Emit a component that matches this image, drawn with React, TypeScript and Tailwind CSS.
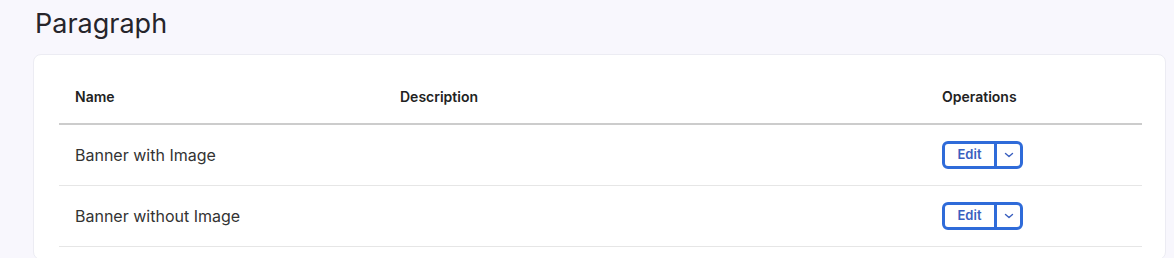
import React from "react";

const rows = ["Banner with Image", "Banner without Image"];

function SplitButton() {
  return (
    <div className="flex h-[28px] w-[81px] overflow-hidden rounded-[6px] border-[3px] border-[#2f6bd9] bg-white">
      <button className="flex w-[52px] items-center justify-center border-r-[3px] border-[#2f6bd9] text-[13px] font-semibold text-[#3a5fbf]">
        Edit
      </button>
      <button className="flex flex-1 items-center justify-center text-[#3a5fbf]">
        <svg width="14" height="14" viewBox="0 0 14 14" fill="none">
          <path d="M3.5 5.5 L7 8.5 L10.5 5.5" stroke="currentColor" strokeWidth="1.4" strokeLinecap="round" strokeLinejoin="round" />
        </svg>
      </button>
    </div>
  );
}

export default function App() {
  return (
    <div
      className="min-h-[258px] bg-[#f8f7fd] pl-[33px] pr-[8px] pt-[6px]"
      style={{ fontFamily: "Inter, 'Noto Sans', sans-serif" }}
    >
      <h1 className="pl-[2px] text-[27px] font-normal leading-[36px] text-[#26252b]">Paragraph</h1>
      <div className="mt-[12px] rounded-[8px] border border-[#ececf3] bg-white pb-[12px] pl-[25px] pr-[23px] pt-[15px]">
        <div className="grid grid-cols-[325px_542px_1fr] border-b-2 border-[#cccccc] h-[55px] items-center text-[14px] font-semibold text-[#222222]">
          <div className="pl-[16px]">Name</div>
          <div className="pl-[16px]">Description</div>
          <div className="pl-[16px]">Operations</div>
        </div>
        {rows.map((r) => (
          <div
            key={r}
            className="grid h-[61px] grid-cols-[325px_542px_1fr] items-center border-b border-[#e6e6e6] text-[16px] text-[#333333]"
          >
            <div className="pl-[16px]">{r}</div>
            <div className="pl-[16px]"></div>
            <div className="pl-[16px]">
              <SplitButton />
            </div>
          </div>
        ))}
      </div>
    </div>
  );
}
